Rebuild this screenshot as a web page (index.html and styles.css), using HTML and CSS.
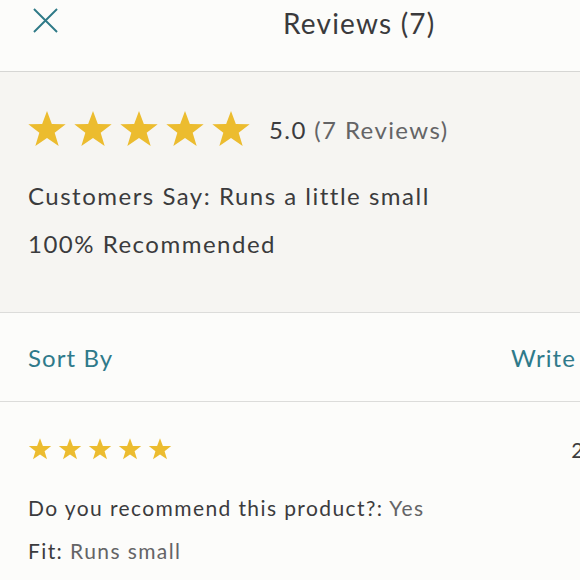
FILE: index.html
```html
<!DOCTYPE html>
<html>
<head>
<meta charset="utf-8">
<link rel="stylesheet" href="styles.css">
</head>
<body>
<div class="page">
  <header class="topbar">
    <svg class="close" viewBox="0 0 26 26" width="26" height="26"><path d="M1 1 L25 25 M25 1 L1 25" stroke="#2f7a87" stroke-width="2" fill="none"/></svg>
    <h1 class="title">Reviews (7)</h1>
  </header>
  <section class="summary">
    <div class="rating-row">
      <div class="stars big">
        <svg viewBox="0 0 24 24"><path d="M12 1.2 L14.9 9.0 L23.2 9.1 L16.6 14.2 L19 22.2 L12 17.4 L5 22.2 L7.4 14.2 L0.8 9.1 L9.1 9.0 Z"/></svg>
        <svg viewBox="0 0 24 24"><path d="M12 1.2 L14.9 9.0 L23.2 9.1 L16.6 14.2 L19 22.2 L12 17.4 L5 22.2 L7.4 14.2 L0.8 9.1 L9.1 9.0 Z"/></svg>
        <svg viewBox="0 0 24 24"><path d="M12 1.2 L14.9 9.0 L23.2 9.1 L16.6 14.2 L19 22.2 L12 17.4 L5 22.2 L7.4 14.2 L0.8 9.1 L9.1 9.0 Z"/></svg>
        <svg viewBox="0 0 24 24"><path d="M12 1.2 L14.9 9.0 L23.2 9.1 L16.6 14.2 L19 22.2 L12 17.4 L5 22.2 L7.4 14.2 L0.8 9.1 L9.1 9.0 Z"/></svg>
        <svg viewBox="0 0 24 24"><path d="M12 1.2 L14.9 9.0 L23.2 9.1 L16.6 14.2 L19 22.2 L12 17.4 L5 22.2 L7.4 14.2 L0.8 9.1 L9.1 9.0 Z"/></svg>
      </div>
      <div class="score">5.0 <span class="muted">(7 Reviews)</span></div>
    </div>
    <p class="line first">Customers Say: Runs a little small</p>
    <p class="line">100% Recommended</p>
  </section>
  <nav class="sortbar">
    <span class="link">Sort By</span>
    <span class="link">Write</span>
  </nav>
  <article class="review">
    <div class="review-head">
      <div class="stars small">
        <svg viewBox="0 0 24 24"><path d="M12 1.2 L14.9 9.0 L23.2 9.1 L16.6 14.2 L19 22.2 L12 17.4 L5 22.2 L7.4 14.2 L0.8 9.1 L9.1 9.0 Z"/></svg>
        <svg viewBox="0 0 24 24"><path d="M12 1.2 L14.9 9.0 L23.2 9.1 L16.6 14.2 L19 22.2 L12 17.4 L5 22.2 L7.4 14.2 L0.8 9.1 L9.1 9.0 Z"/></svg>
        <svg viewBox="0 0 24 24"><path d="M12 1.2 L14.9 9.0 L23.2 9.1 L16.6 14.2 L19 22.2 L12 17.4 L5 22.2 L7.4 14.2 L0.8 9.1 L9.1 9.0 Z"/></svg>
        <svg viewBox="0 0 24 24"><path d="M12 1.2 L14.9 9.0 L23.2 9.1 L16.6 14.2 L19 22.2 L12 17.4 L5 22.2 L7.4 14.2 L0.8 9.1 L9.1 9.0 Z"/></svg>
        <svg viewBox="0 0 24 24"><path d="M12 1.2 L14.9 9.0 L23.2 9.1 L16.6 14.2 L19 22.2 L12 17.4 L5 22.2 L7.4 14.2 L0.8 9.1 L9.1 9.0 Z"/></svg>
      </div>
      <span class="date">2</span>
    </div>
    <p class="detail">Do you recommend this product?: <span class="muted">Yes</span></p>
    <p class="detail">Fit: <span class="muted">Runs small</span></p>
  </article>
</div>
</body>
</html>
```
FILE: styles.css
```css
html, body {
  margin: 0;
  padding: 0;
  background: #fcfcfa;
}
.page {
  width: 580px;
  height: 580px;
  overflow: hidden;
  font-family: "Lato", "Open Sans", sans-serif;
  color: #3b3b3d;
  letter-spacing: 1.5px;
}
.topbar {
  height: 71px;
  display: flex;
  align-items: flex-start;
  padding-left: 33px;
  border-bottom: 1px solid #d6d6d4;
  box-sizing: content-box;
}
.close {
  margin-top: 8px;
  width: 25px;
  height: 25px;
}
.title {
  margin: 6px 0 0 225px;
  font-size: 28px;
  font-weight: 400;
  line-height: 34px;
  letter-spacing: 1.2px;
  color: #3a3a3c;
}
.summary {
  background: #f6f5f2;
  height: 241px;
  border-bottom: 1px solid #dcdcda;
  padding: 38px 0 0 28px;
  box-sizing: border-box;
}
.rating-row {
  display: flex;
  align-items: center;
  height: 38px;
}
.stars {
  display: flex;
}
.stars svg {
  fill: #ecbc2f;
}
.stars.big svg {
  width: 40px;
  height: 40px;
  margin-right: 6px;
}
.stars.big {
  margin-left: -1px;
}
.score {
  margin-left: 12px;
  font-size: 24px;
  letter-spacing: 1.4px;
  color: #3c3c3e;
}
.muted {
  color: #646466;
}
.line {
  margin: 0;
  font-size: 24px;
  line-height: 48px;
}
.line.first {
  margin-top: 24px;
}
.sortbar {
  height: 88px;
  border-bottom: 1px solid #dcdcda;
  display: flex;
  justify-content: space-between;
  align-items: center;
  padding: 0 4px 0 28px;
}
.link {
  color: #2f7a8a;
  font-size: 24px;
  letter-spacing: 1.1px;
}
.review {
  padding: 34px 0 0 28px;
  height: 175px;
  border-bottom: 2px solid #6a6a6a;
}
.review-head {
  display: flex;
  align-items: center;
  justify-content: space-between;
  height: 26px;
  margin-right: -5px;
}
.stars.small svg {
  width: 24px;
  height: 24px;
  margin-right: 6px;
}
.date {
  font-size: 21px;
  color: #3c3c3e;
}
.detail {
  margin: 0;
  font-size: 21px;
  line-height: 43px;
  letter-spacing: 1.4px;
}
.detail:first-of-type {
  margin-top: 24px;
}
```
